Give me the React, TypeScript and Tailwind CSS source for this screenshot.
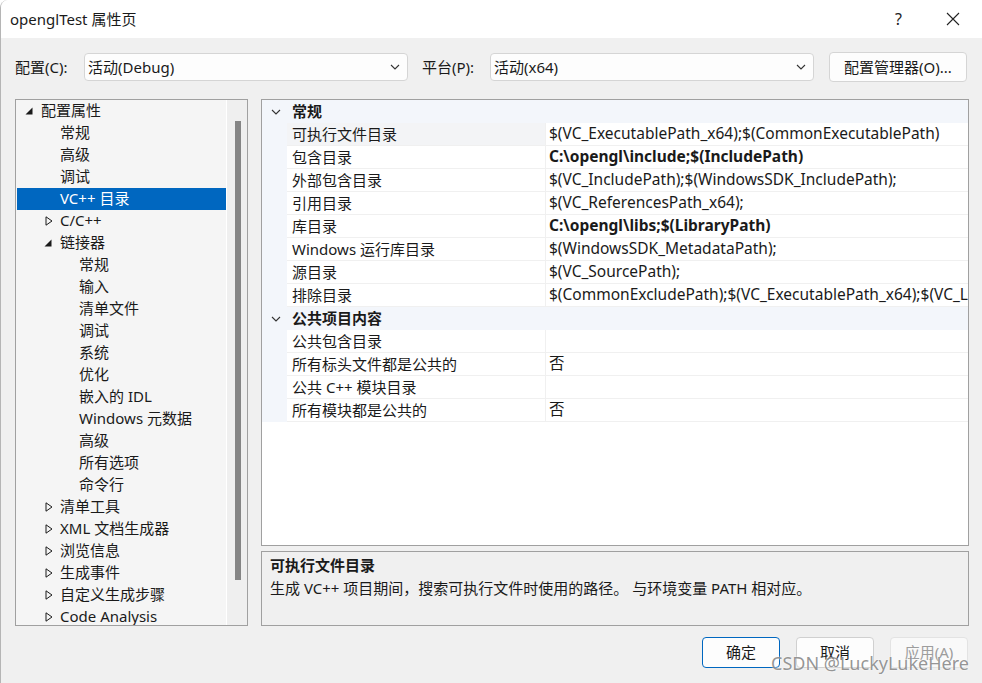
import React from "react";

const FONT = {
  fontFamily: '"Segoe UI", "Noto Sans", "Noto Sans CJK SC", sans-serif',
};

type TreeItem = {
  label: string;
  level: number;
  arrow?: "open" | "closed";
  selected?: boolean;
};

const treeItems: TreeItem[] = [
  { label: "配置属性", level: 0, arrow: "open" },
  { label: "常规", level: 1 },
  { label: "高级", level: 1 },
  { label: "调试", level: 1 },
  { label: "VC++ 目录", level: 1, selected: true },
  { label: "C/C++", level: 1, arrow: "closed" },
  { label: "链接器", level: 1, arrow: "open" },
  { label: "常规", level: 2 },
  { label: "输入", level: 2 },
  { label: "清单文件", level: 2 },
  { label: "调试", level: 2 },
  { label: "系统", level: 2 },
  { label: "优化", level: 2 },
  { label: "嵌入的 IDL", level: 2 },
  { label: "Windows 元数据", level: 2 },
  { label: "高级", level: 2 },
  { label: "所有选项", level: 2 },
  { label: "命令行", level: 2 },
  { label: "清单工具", level: 1, arrow: "closed" },
  { label: "XML 文档生成器", level: 1, arrow: "closed" },
  { label: "浏览信息", level: 1, arrow: "closed" },
  { label: "生成事件", level: 1, arrow: "closed" },
  { label: "自定义生成步骤", level: 1, arrow: "closed" },
  { label: "Code Analysis", level: 1, arrow: "closed" },
];

type Row = { name: string; value?: string; bold?: boolean; selected?: boolean };

const groups: { title: string; rows: Row[] }[] = [
  {
    title: "常规",
    rows: [
      { name: "可执行文件目录", value: "$(VC_ExecutablePath_x64);$(CommonExecutablePath)", selected: true },
      { name: "包含目录", value: "C:\\opengl\\include;$(IncludePath)", bold: true },
      { name: "外部包含目录", value: "$(VC_IncludePath);$(WindowsSDK_IncludePath);" },
      { name: "引用目录", value: "$(VC_ReferencesPath_x64);" },
      { name: "库目录", value: "C:\\opengl\\libs;$(LibraryPath)", bold: true },
      { name: "Windows 运行库目录", value: "$(WindowsSDK_MetadataPath);" },
      { name: "源目录", value: "$(VC_SourcePath);" },
      { name: "排除目录", value: "$(CommonExcludePath);$(VC_ExecutablePath_x64);$(VC_LibraryPath_x64)" },
    ],
  },
  {
    title: "公共项目内容",
    rows: [
      { name: "公共包含目录", value: "" },
      { name: "所有标头文件都是公共的", value: "否" },
      { name: "公共 C++ 模块目录", value: "" },
      { name: "所有模块都是公共的", value: "否" },
    ],
  },
];

function Chevron() {
  return (
    <svg width="10" height="6" viewBox="0 0 10 6" fill="none">
      <path d="M1 1l4 4 4-4" stroke="#333" strokeWidth="1.1" />
    </svg>
  );
}

function Dropdown({ text }: { text: string }) {
  return (
    <div className="flex items-center justify-between w-[324px] h-[28px] bg-[#fdfdfd] border border-[#d5d5d5] rounded-[4px] pl-[3px] pr-[7px]">
      <span>{text}</span>
      <Chevron />
    </div>
  );
}

function TreeArrow({ kind }: { kind: "open" | "closed" }) {
  if (kind === "open") {
    return (
      <svg width="8" height="8" viewBox="0 0 8 8">
        <path d="M7.5 0.5V7.5H0.5Z" fill="#1a1a1a" />
      </svg>
    );
  }
  return (
    <svg width="8" height="10" viewBox="0 0 8 10" fill="none">
      <path d="M1 0.8V9.2L7 5Z" stroke="#1a1a1a" strokeWidth="1" strokeLinejoin="miter" />
    </svg>
  );
}

function Tree() {
  return (
    <div className="flex w-[233px] h-[527px] border border-[#a0a0a0] bg-[#f5f5f5] overflow-hidden">
      <div className="flex-1 pl-px overflow-hidden">
        {treeItems.map((it, i) => (
          <div
            key={i}
            className={`relative h-[22px] flex items-center whitespace-nowrap pb-[1px] ${
              it.selected ? "bg-[#0067c0] text-white" : "text-[#1a1a1a]"
            }`}
            style={{ paddingLeft: 24 + it.level * 19 }}
          >
            {it.arrow && (
              <span
                className="absolute top-0 h-[22px] flex items-center"
                style={{ left: 8 + it.level * 19 + (it.arrow === "closed" ? 1 : 0) }}
              >
                <TreeArrow kind={it.arrow} />
              </span>
            )}
            {it.label}
          </div>
        ))}
      </div>
      <div className="w-[21px] bg-[#efefef] border-l border-white pt-[21px] flex justify-center">
        <div className="w-[6px] h-[459px] bg-[#858585] ml-px" />
      </div>
    </div>
  );
}

function Grid() {
  return (
    <div className="h-[447px] border border-[#a0a0a0] bg-white overflow-hidden">
      {groups.map((g) => (
        <div key={g.title}>
          <div className="flex h-[23px] items-center bg-[#f3f6fb]">
            <div className="w-[25px] flex justify-center pl-[2px]">
              <Chevron />
            </div>
            <div className="pl-[5px] font-bold">{g.title}</div>
          </div>
          {g.rows.map((r) => (
            <div key={r.name} className="flex h-[23px]">
              <div className="w-[25px] bg-[#f3f6fb]" />
              <div
                className={`w-[259px] border-b border-r border-[#f0f0f0] pl-[5px] flex items-center whitespace-nowrap ${
                  r.selected ? "bg-[#f3f4f6]" : ""
                }`}
              >
                {r.name}
              </div>
              <div
                className={`flex-1 min-w-0 border-b border-[#f0f0f0] pl-[3px] flex items-center whitespace-nowrap overflow-hidden text-[15.5px] ${
                  r.bold ? "font-bold" : ""
                }`}
              >
                {r.value}
              </div>
            </div>
          ))}
        </div>
      ))}
    </div>
  );
}

function Button({
  children,
  variant,
}: {
  children: React.ReactNode;
  variant: "primary" | "normal" | "disabled";
}) {
  const cls =
    variant === "primary"
      ? "border-[#0067c0] bg-[#fdfdfd] text-[#1a1a1a]"
      : variant === "normal"
      ? "border-[#d0d0d0] bg-[#fdfdfd] text-[#1a1a1a]"
      : "border-[#e3e3e3] bg-[#f9f9f9] text-[#9d9d9d]";
  return (
    <div
      className={`w-[78px] h-[31px] rounded-[4px] border flex items-center justify-center ${cls}`}
    >
      {children}
    </div>
  );
}

export default function App() {
  return (
    <div
      className="relative w-[982px] h-[683px] bg-[#f0f0f0] text-[15px] text-[#1a1a1a] overflow-hidden border-l border-[#b5b5b5] rounded-tl-[8px]"
      style={FONT}
    >
      <div className="h-[38px] bg-white flex items-center justify-between pl-[9px] pr-[22px]">
        <span>openglTest 属性页</span>
        <div className="flex items-center gap-[44px]">
          <span className="text-[16px] text-[#222]">?</span>
          <svg width="14" height="14" viewBox="0 0 14 14">
            <path d="M1 1L13 13M13 1L1 13" stroke="#222" strokeWidth="1.1" />
          </svg>
        </div>
      </div>

      <div className="flex items-center mt-[14px] h-[30px] pl-[14px]">
        <span className="w-[69px]">配置(C):</span>
        <Dropdown text="活动(Debug)" />
        <span className="w-[68px] ml-[14px]">平台(P):</span>
        <Dropdown text="活动(x64)" />
        <div className="ml-[15px] w-[138px] h-[30px] bg-[#fdfdfd] border border-[#d5d5d5] rounded-[4px] flex items-center justify-center">
          配置管理器(O)...
        </div>
      </div>

      <div className="flex mt-[17px] pl-[14px] gap-[13px]">
        <Tree />
        <div className="w-[708px] flex flex-col gap-[5px]">
          <Grid />
          <div className="h-[75px] border border-[#a0a0a0] bg-[#f0f0f0] px-[8px] pt-[2px]">
            <div className="font-bold leading-[23px]">可执行文件目录</div>
            <div className="leading-[23px]">
              生成 VC++ 项目期间，搜索可执行文件时使用的路径。 与环境变量 PATH 相对应。
            </div>
          </div>
        </div>
      </div>

      <div className="flex justify-end gap-[16px] mt-[11px] pr-[14px]">
        <Button variant="primary">确定</Button>
        <Button variant="normal">取消</Button>
        <Button variant="disabled">应用(A)</Button>
      </div>

      <div
        className="absolute left-[770px] top-[650px] text-[18px] text-[#7a7a7a]/80 whitespace-nowrap"
        style={{ textShadow: "0 0 2px #fff" }}
      >
        CSDN @LuckyLukeHere
      </div>
    </div>
  );
}
